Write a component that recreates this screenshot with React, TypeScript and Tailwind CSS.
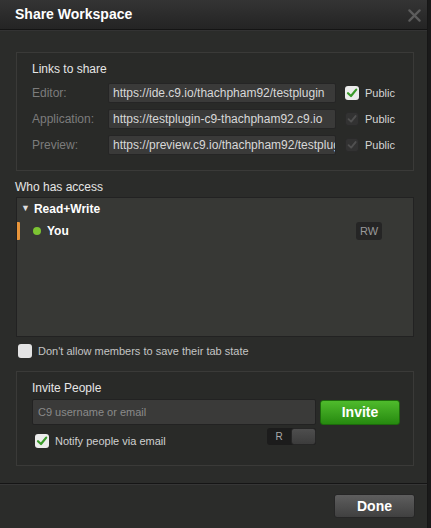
import React from 'react';

const sans = { fontFamily: '"Liberation Sans", Arial, sans-serif' };

const Check = ({ color }: { color: string }) => (
  <svg viewBox="0 0 14 14" className="w-[14px] h-[14px]">
    <path d="M3 7.2 L6 10 L11.2 3.6" fill="none" stroke={color} strokeWidth="2.2" strokeLinecap="round" strokeLinejoin="round" />
  </svg>
);

const CheckBox = ({ state }: { state: 'on' | 'off' | 'disabled' }) => {
  if (state === 'on')
    return (
      <div className="w-[14px] h-[14px] rounded-[3px] bg-[#ececec] flex items-center justify-center">
        <Check color="#3a9a2a" />
      </div>
    );
  if (state === 'disabled')
    return (
      <div className="w-[14px] h-[14px] rounded-[3px] bg-[#323232] border border-[#2a2a2a] flex items-center justify-center">
        <Check color="#505050" />
      </div>
    );
  return <div className="w-[14px] h-[14px] rounded-[3px] bg-[#e4e4e4]" />;
};

const links = [
  { label: 'Editor:', url: 'https://ide.c9.io/thachpham92/testplugin', on: true },
  { label: 'Application:', url: 'https://testplugin-c9-thachpham92.c9.io', on: false },
  { label: 'Preview:', url: 'https://preview.c9.io/thachpham92/testplugin', on: false },
];

export default function App() {
  return (
    <div className="w-[431px] h-[528px] bg-[#1a1a1a] flex overflow-hidden" style={sans}>
      <div className="w-[428px] h-full bg-[#2b2c2a] flex flex-col border-r border-[#161616]">
        {/* Header */}
        <div className="h-[30px] flex items-center justify-between pl-[15px] pr-[6px] bg-gradient-to-b from-[#343434] to-[#242424] border-b border-[#141414]">
          <span className="text-white font-bold text-[14px]">Share Workspace</span>
          <svg viewBox="0 0 14 14" className="w-[13px] h-[13px] mt-[1px]">
            <path d="M1.5 1.5 L12.5 12.5 M12.5 1.5 L1.5 12.5" stroke="#5c5c5c" strokeWidth="2.4" strokeLinecap="round" />
          </svg>
        </div>

        {/* Body */}
        <div className="flex-1 flex flex-col px-[16px] pt-[21px] border-t border-[#333]">
          <div className="h-[119px] w-[398px] border border-[#3a3a38] bg-[#292a28] pl-[15px] pt-[9px]">
            <div className="text-[12px] text-[#e6e6e6] leading-[14px]">Links to share</div>
            <div className="flex flex-col gap-[6px] mt-[7px]">
              {links.map((l) => (
                <div key={l.label} className="flex items-center h-[20px]">
                  <span className="w-[76px] text-[12px] text-[#7c7c7c]">{l.label}</span>
                  <div className="w-[228px] h-[20px] bg-[#3a3a39] border border-[#252525] rounded-[2px] px-[4px] text-[12px] leading-[18px] text-[#d8d8d8] overflow-hidden whitespace-nowrap">
                    {l.url}
                  </div>
                  <div className="ml-[9px]">
                    <CheckBox state={l.on ? 'on' : 'disabled'} />
                  </div>
                  <span className="ml-[6px] text-[11px] text-[#d6d6d6]">Public</span>
                </div>
              ))}
            </div>
          </div>

          <div className="mt-[9px] text-[12px] text-[#e6e6e6] leading-[14px] -ml-[1px]">Who has access</div>
          <div className="mt-[3px] h-[140px] w-[398px] border border-[#222] bg-[#373835] pt-[4px]">
            <div className="flex items-center h-[14px] pl-[4px] text-[12px] font-bold text-white">
              <span className="text-[9px] text-[#ddd] mr-[4px]">▼</span>
              Read+Write
            </div>
            <div className="flex items-center h-[18px] mt-[6px]">
              <div className="w-[3px] h-[18px] bg-[#e8953a] rounded-r-[1px]" />
              <div className="w-[8px] h-[8px] rounded-full bg-[#7cc432] ml-[13px]" />
              <span className="ml-[6px] text-[12px] font-bold text-white">You</span>
              <span className="ml-auto mr-[31px] w-[26px] h-[18px] rounded-[3px] bg-[#252525] text-[11px] text-[#9a9a9a] flex items-center justify-center">RW</span>
            </div>
          </div>

          <div className="flex items-center mt-[7px] ml-[2px] h-[14px]">
            <CheckBox state="off" />
            <span className="ml-[6px] text-[11px] text-[#c4c4c4]">Don't allow members to save their tab state</span>
          </div>

          <div className="mt-[13px] h-[95px] w-[398px] border border-[#3a3a38] bg-[#292a28] pl-[15px] pt-[9px]">
            <div className="text-[12px] text-[#e6e6e6] leading-[14px]">Invite People</div>
            <div className="flex items-center mt-[4px]">
              <div className="w-[284px] h-[26px] bg-[#3a3a39] border border-[#222] rounded-[2px] px-[5px] text-[11px] leading-[24px] text-[#8a8a8a]">
                C9 username or email
              </div>
              <div className="ml-[4px] w-[80px] h-[25px] rounded-[3px] bg-gradient-to-b from-[#4fbb2c] to-[#268a0f] border border-[#1d6a0c] flex items-center justify-center text-white font-bold text-[14px]">
                Invite
              </div>
            </div>
            <div className="flex items-start mt-[3px] w-[284px]">
              <div className="flex items-center mt-[5px] ml-[3px]">
                <CheckBox state="on" />
                <span className="ml-[6px] text-[11px] text-[#d0d0d0]">Notify people via email</span>
              </div>
              <div className="ml-auto w-[49px] h-[17px] rounded-[3px] bg-[#1c1c1c] flex items-center">
                <span className="w-[24px] text-center text-[10px] text-[#aaa] leading-none">R</span>
                <div className="w-[25px] h-[17px] rounded-[3px] bg-gradient-to-b from-[#4e4e4e] to-[#3c3c3c] border border-[#262626]" />
              </div>
            </div>
          </div>
        </div>

        {/* Footer */}
        <div className="h-[45px] border-t border-[#151515] flex items-start justify-end pr-[12px] pt-[10px] shadow-[inset_0_1px_0_#363636]">
          <div className="w-[81px] h-[24px] rounded-[3px] bg-gradient-to-b from-[#5e5e5e] to-[#404040] border border-[#262626] flex items-center justify-center text-white font-bold text-[14px]">
            Done
          </div>
        </div>
      </div>
    </div>
  );
}
